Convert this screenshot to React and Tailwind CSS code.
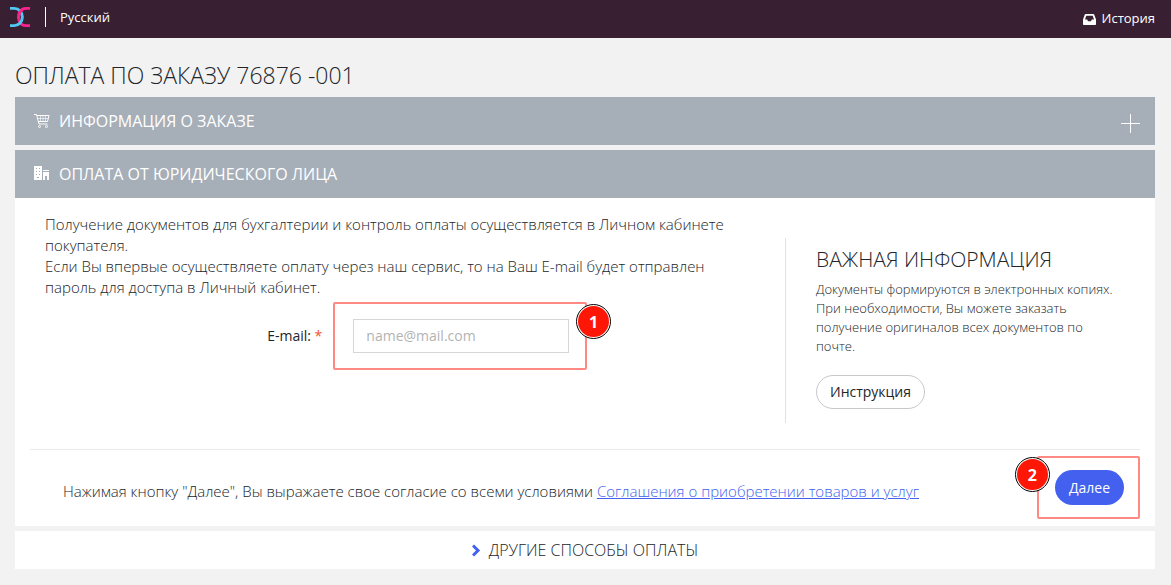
import React, { useState } from 'react';

const Logo = () => (
    <svg width="20" height="20" viewBox="0 0 21 21" fill="none" strokeWidth="3">
        <path d="M21 1.5h-4.5c-5 0-7.500 4-7.500 9s2.500 9 7.500 9H21" stroke="#f9238b" />
        <path d="M0 1.500h4.500c5 0 8.500 4 8.500 9s-3.500 9-8.500 9H0" stroke="#4fc9f3" />
        <path d="M9 12c0-4 1.500-8 4.500-9.500" stroke="#f9238b" />
    </svg>
);

const InboxIcon = () => (
    <svg width="13" height="11" viewBox="0 0 13 11" fill="currentColor">
        <path
            fillRule="evenodd"
            d="M2.800 0h7.400c.5 0 .9.300 1.100.800L13 5.500V10c0 .600-.4 1-1 1H1c-.6 0-1-.4-1-1V5.500L1.700.8C1.900.300 2.300 0 2.800 0zM3.300 1.700L2 5.500h2.200L5 7.200h3l.8-1.700H11L9.700 1.700z"
        />
    </svg>
);

const CartIcon = () => (
    <svg width="16" height="16" viewBox="0 0 16 16" fill="none" stroke="currentColor">
        <path d="M0 1.500h2.500l2.500 9.500h8.500M3 2.500h12l-1.500 6H4.500" />
        <path d="M4 5.500h10M6.500 2.500v6M9 2.500v6M11.500 2.500v6" strokeOpacity="0.6" />
        <circle cx="5.500" cy="13.500" r="1" />
        <circle cx="12.500" cy="13.500" r="1" />
    </svg>
);

const BuildingIcon = () => (
    <svg width="16" height="16" viewBox="0 0 16 16" fill="currentColor">
        <path
            fillRule="evenodd"
            d="M0 0h8v14H0zM2 2v1h1V2zM5 2v1h1V2zM2 5v1h1V5zM5 5v1h1V5zM2 8v1h1V8zM5 8v1h1V8zM3 11v1h2v-1zM9 4h6v1H9zM9 6h6v8h-2v-4h-2v4H9z"
        />
    </svg>
);

const Marker = ({ number, className }) => (
    <span
        className={`absolute flex h-[35px] w-[35px] items-center justify-center rounded-full border border-black bg-white p-px ${className}`}
    >
        <span className="flex h-full w-full items-center justify-center rounded-full bg-[#fe1606] text-base font-bold text-white">
            {number}
        </span>
    </span>
);

const App = () => {
    const [email, setEmail] = useState('');

    return (
        <div className="min-h-screen bg-[#f2f2f2] font-['Open_Sans',sans-serif] text-[#212529]">
            <header className="flex h-[38px] items-center justify-between bg-[#381f31] pr-4 pl-[10px] text-[13px] text-white">
                <div className="flex items-center pb-1">
                    <a href="#home" aria-label="Главная">
                        <Logo />
                    </a>
                    <a href="#lang" className="ml-[15px] border-l border-white pl-[14px] leading-5">
                        Русский
                    </a>
                </div>
                <a href="#history" className="flex items-center gap-1.5">
                    <InboxIcon /> История
                </a>
            </header>

            <main className="px-[15px] pr-4 pt-5 pb-4">
                <h1 className="mb-[5px] text-[23px] leading-[34px] font-light">ОПЛАТА ПО ЗАКАЗУ 76876 -001</h1>

                <button className="mb-[5px] flex h-12 w-full items-center gap-[9px] bg-[#a6aeb8] px-[15px] pl-[19px] text-left text-base text-white">
                    <CartIcon />
                    <span className="grow">ИНФОРМАЦИЯ О ЗАКАЗЕ</span>
                    <svg width="19" height="19" viewBox="0 0 19 19" stroke="currentColor" className="mt-1">
                        <path d="M9.500 0v19M0 9.500h19" />
                    </svg>
                </button>

                <section className="mb-[5px] bg-white">
                    <h2 className="flex h-12 items-center gap-[9px] bg-[#a6aeb8] pl-[19px] text-base text-white">
                        <BuildingIcon />
                        ОПЛАТА ОТ ЮРИДИЧЕСКОГО ЛИЦА
                    </h2>

                    <div className="mx-[15px] grid grid-cols-3 pt-4 pb-[26px]">
                        <div className="col-span-2">
                            <p className="px-[15px] text-[15px] leading-[21px] font-light">
                                Получение документов для бухгалтерии и контроль оплаты осуществляется в Личном
                                кабинете покупателя.
                                <br />
                                Если Вы впервые осуществляете оплату через наш сервис, то на Ваш E-mail будет
                                отправлен пароль для доступа в Личный кабинет.
                            </p>
                            <div className="mt-[21px] grid grid-cols-12 items-center">
                                <label htmlFor="email" className="col-span-5 pr-4 text-right text-sm">
                                    E-mail: <span className="text-[#f2522e]">*</span>
                                </label>
                                <div className="relative col-span-4 pr-4 pl-[15px]">
                                    <input
                                        id="email"
                                        type="email"
                                        value={email}
                                        onChange={(e) => setEmail(e.target.value)}
                                        placeholder="name@mail.com"
                                        className="block h-[34px] w-full border border-[#d6d6d6] px-3 pb-0.5 text-sm placeholder:text-[#b3b3b3]"
                                    />
                                    <span className="pointer-events-none absolute -inset-y-[17px] -right-0.5 -left-[5px] rounded-xs border-2 border-[#ff8983]" />
                                    <Marker number={1} className="-top-[15px] -right-[26px]" />
                                </div>
                            </div>
                        </div>

                        <aside className="mt-6 ml-[15px] border-l border-[#dee2e6] pr-[15px] pb-[14px] pl-[30px]">
                            <h3 className="mt-1 text-[21px] leading-[34px] font-light">ВАЖНАЯ ИНФОРМАЦИЯ</h3>
                            <p className="mt-1 text-[13px] leading-[19px] font-light">
                                Документы формируются в электронных копиях. При необходимости, Вы можете заказать
                                получение оригиналов всех документов по почте.
                            </p>
                            <button className="mt-[19px] h-[34px] rounded-full border border-[#c8c8c8] px-[13px] text-sm">
                                Инструкция
                            </button>
                        </aside>
                    </div>

                    <div className="mx-[15px] flex items-center justify-between border-t border-[#ebebeb] pt-5 pb-[21px] pr-4 pl-[33px]">
                        <p className="pt-2 text-[15px] font-light">
                            Нажимая кнопку "Далее", Вы выражаете свое согласие со всеми условиями{' '}
                            <a href="#agreement" className="text-[#4361ee] underline">
                                Соглашения о приобретении товаров и услуг
                            </a>
                        </p>
                        <div className="relative">
                            <button className="block h-[35px] rounded-full bg-[#4361ee] px-[14px] text-sm text-white">
                                Далее
                            </button>
                            <span className="pointer-events-none absolute -inset-y-[14px] -right-4 -left-[18px] rounded-xs border-2 border-[#ff8983]" />
                            <Marker number={2} className="-top-[13px] -left-10" />
                        </div>
                    </div>
                </section>

                <button className="flex h-[38px] w-full items-center justify-center gap-2 bg-white text-base font-light">
                    <svg width="9" height="13" viewBox="0 0 9 13" fill="none" stroke="#4361ee" strokeWidth="3">
                        <path d="M1 1.500l5 5-5 5" />
                    </svg>
                    ДРУГИЕ СПОСОБЫ ОПЛАТЫ
                </button>
            </main>
        </div>
    );
};

export default App;
